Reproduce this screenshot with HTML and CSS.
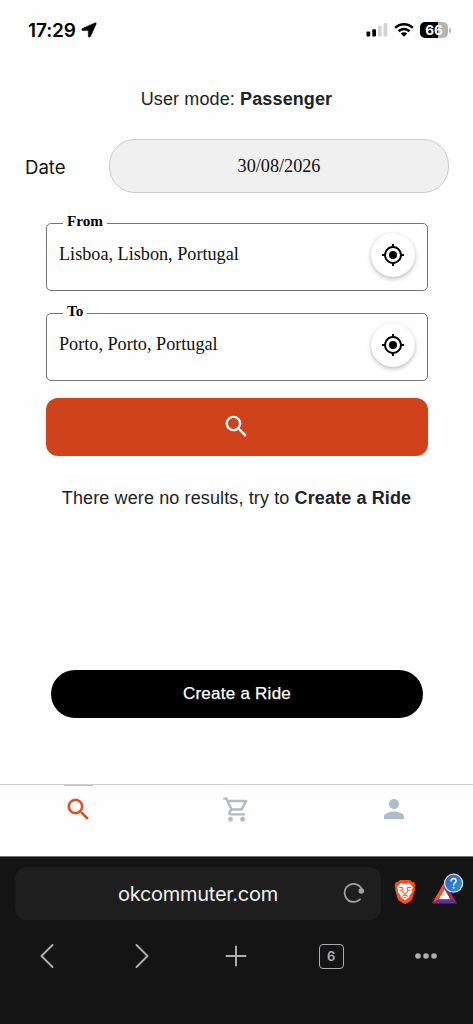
FILE: index.html
```html
<!DOCTYPE html>
<html lang="en">
<head>
<meta charset="utf-8">
<title>okcommuter</title>
<link rel="stylesheet" href="styles.css">
</head>
<body>
<header class="status">
  <div class="status-left">
    <span class="time">17:29</span>
    <svg class="arrow" width="16" height="16" viewBox="0 0 16 16"><path stroke="#000" stroke-width=".5" d="M13.800.9 1.600 6.400c-1.200.6-1 2.200.4 2.200h4.800c.3 0 .5.200.5.500v4.800c0 1.500 1.700 1.700 2.300.4L15.100 2.200c.4-.9-.4-1.700-1.300-1.300Z"/></svg>
  </div>
  <div class="status-right">
    <svg width="22" height="16" viewBox="0 0 22 16"><rect x=".5" y="9.500" width="3.700" height="5" rx="1"/><rect x="6.300" y="7.300" width="3.700" height="7.200" rx="1"/><g fill="#d3d3d3"><rect x="12" y="3.800" width="3.700" height="10.700" rx="1"/><rect x="17.600" y="1" width="3.700" height="13.500" rx="1"/></g></svg>
    <svg width="20" height="16" viewBox="0 0 20 16"><g fill="none" stroke="#000" stroke-width="2.600"><path d="M1.200 5.900C6.200 1 13.800 1 18.800 5.900"/><path d="M4.500 9.200c3.200-3 7.800-3 11 0"/></g><path d="M6.800 11.600c1.900-1.700 4.500-1.700 6.400 0L10 14.800Z"/></svg>
    <div class="battery"><span class="battery-body">66</span><span class="battery-cap"></span></div>
  </div>
</header>

<main class="page">
  <p class="mode">User mode: <b>Passenger</b></p>
  <div class="date-row">
    <label class="date-label">Date</label>
    <div class="date-field">30/08/2026</div>
  </div>
  <form class="search">
    <fieldset class="place">
      <legend class="place-label">From</legend>
      <div class="place-row">
        <span class="place-value">Lisboa, Lisbon, Portugal</span>
        <button class="locate" type="button"><svg width="24" height="24" viewBox="0 0 24 24"><path d="M12 8a4 4 0 1 0 0 8 4 4 0 0 0 0-8zm8.940 3A9 9 0 0 0 13 3.060V1h-2v2.060A9 9 0 0 0 3.060 11H1v2h2.060A9 9 0 0 0 11 20.940V23h2v-2.060A9 9 0 0 0 20.940 13H23v-2h-2.060zM12 19a7 7 0 1 1 0-14 7 7 0 0 1 0 14z"/></svg></button>
      </div>
    </fieldset>
    <fieldset class="place">
      <legend class="place-label">To</legend>
      <div class="place-row">
        <span class="place-value">Porto, Porto, Portugal</span>
        <button class="locate" type="button"><svg width="24" height="24" viewBox="0 0 24 24"><path d="M12 8a4 4 0 1 0 0 8 4 4 0 0 0 0-8zm8.940 3A9 9 0 0 0 13 3.060V1h-2v2.060A9 9 0 0 0 3.060 11H1v2h2.060A9 9 0 0 0 11 20.940V23h2v-2.060A9 9 0 0 0 20.940 13H23v-2h-2.060zM12 19a7 7 0 1 1 0-14 7 7 0 0 1 0 14z"/></svg></button>
      </div>
    </fieldset>
    <button class="submit" type="button"><svg width="29" height="29" viewBox="0 0 24 24"><path fill="#fff" d="M15.500 14h-.79l-.28-.27A6.470 6.470 0 0 0 16 9.500 6.500 6.500 0 1 0 9.500 16c1.610 0 3.090-.59 4.230-1.570l.27.28v.79l5 4.990L20.490 19l-4.990-5zm-6 0C7.010 14 5 11.990 5 9.500S7.010 5 9.500 5 14 7.010 14 9.500 11.990 14 9.500 14z"/></svg></button>
  </form>
  <p class="empty">There were no results, try to <b>Create a Ride</b></p>
  <button class="create" type="button">Create a Ride</button>
</main>

<nav class="tabs">
  <a class="tab tab-active"><svg width="29" height="29" viewBox="0 0 24 24"><path fill="#dc4f24" stroke="#dc4f24" stroke-width=".2" d="M15.500 14h-.79l-.28-.27A6.470 6.470 0 0 0 16 9.500 6.500 6.500 0 1 0 9.500 16c1.610 0 3.090-.59 4.230-1.570l.27.28v.79l5 4.990L20.490 19l-4.990-5zm-6 0C7.010 14 5 11.990 5 9.500S7.010 5 9.500 5 14 7.010 14 9.500 11.990 14 9.500 14z"/></svg></a>
  <a class="tab"><svg width="29" height="29" viewBox="0 0 24 24"><path fill="#aebdc7" d="M15.550 13c.75 0 1.410-.41 1.750-1.030l3.580-6.490A.996.996 0 0 0 20.010 4H5.210l-.94-2H1v2h2l3.600 7.590-1.350 2.440C4.520 15.370 5.480 17 7 17h12v-2H7l1.100-2h7.450zM6.160 6h12.150l-2.760 5H8.530L6.160 6zM7 18c-1.100 0-1.990.9-1.990 2S5.900 22 7 22s2-.9 2-2-.9-2-2-2zm10 0c-1.100 0-1.990.9-1.990 2s.89 2 1.990 2 2-.9 2-2-.9-2-2-2z"/></svg></a>
  <a class="tab"><svg width="30" height="30" viewBox="0 0 24 24"><path fill="#aebdc7" d="M12 12c2.210 0 4-1.790 4-4s-1.790-4-4-4-4 1.790-4 4 1.790 4 4 4zm0 2c-2.670 0-8 1.340-8 4v2h16v-2c0-2.660-5.330-4-8-4z"/></svg></a>
</nav>

<footer class="browser">
  <div class="address-row">
    <div class="address">
      <span class="url">okcommuter.com</span>
      <svg class="reload" width="22" height="22" viewBox="0 0 22 22"><path d="M17 17.300A9 9 0 1 1 19.300 8.600" fill="none" stroke="#a2a2a2" stroke-width="1.700" stroke-linecap="round"/><circle cx="18.300" cy="9" r="2.800" fill="#a2a2a2"/></svg>
    </div>
    <svg class="lion" width="22" height="26" viewBox="0 0 22 26"><defs><linearGradient id="shield"><stop stop-color="#f4511e"/><stop offset="1" stop-color="#fb4a12"/></linearGradient></defs><path fill="url(#shield)" d="M6 1h10l2.200 2.100 1.900-.1 1.400 3.500-.8 2.200.4 1.600-3 10-1.700 2L11 25.300l-5.400-3-1.700-2-3-10 .4-1.600-.8-2.200L1.900 3l1.900.1Z"/><path fill="#fff" d="m6.500 4.300 3 .5 1.500-.3 1.500.3 3-.5 3.500 4-1 2.200.2 2.400-2.500 3-.2 1.800L11 21.500l-4.500-3.800-.2-1.800-2.500-3 .2-2.400-1-2.200Z"/><g fill="none" stroke="#f34e1b" stroke-width="1"><path d="m5 8.200 4 .7-.7 2.700 1 2.500L11 15l1.700-.9 1-2.500-.7-2.700 4-.7M5.500 11.100l2.200.2m8.800-.2-2.200.2M11 15v1.300M7.800 17.400 11 16.100l3.200 1.300M9.500 19.100l1.500-.8 1.500.8"/></g></svg>
    <svg class="bat" width="34" height="34" viewBox="0 0 34 34"><defs><linearGradient id="badge" x2="1" y2="1"><stop stop-color="#3159c9"/><stop offset="1" stop-color="#249dd4"/></linearGradient></defs><path fill="#ff4b26" d="M13.500 10 1 31.500l6.500-4.200 6-10Z"/><path fill="#9c2764" d="m13.500 10 12.500 21.500-6.500-4.200-6-10Z"/><path fill="#62329b" d="M1 31.500h25l-6.500-4.200h-12Z"/><path fill="#fff" d="m13.500 17.300 5.800 10H7.700Z"/><circle cx="22.600" cy="11.200" r="9" fill="url(#badge)" stroke="#dce5f4" stroke-width="1.200"/><path d="M20.100 9c.2-3.500 5.400-3.200 5 .1-.2 1.500-2.500 2-2.500 4" fill="none" stroke="#fff" stroke-width="1.400" stroke-linecap="round"/><circle cx="22.600" cy="15.700" r="1" fill="#fff"/></svg>
  </div>
  <div class="toolbar">
    <span class="tool"><svg width="24" height="28" viewBox="0 0 24 28"><path d="M17.500 3 6.500 14l11 11"/></svg></span>
    <span class="tool"><svg width="24" height="28" viewBox="0 0 24 28"><path d="m6.500 3 11 11-11 11"/></svg></span>
    <span class="tool"><svg width="24" height="24" viewBox="0 0 24 24"><path d="M12 2.500v19M2.500 12h19"/></svg></span>
    <span class="tool"><span class="tab-count">6</span></span>
    <span class="tool"><svg width="24" height="24" viewBox="0 0 24 24"><g fill="#adadad" stroke="none"><circle cx="4" cy="12" r="2.800"/><circle cx="12" cy="12" r="2.800"/><circle cx="20" cy="12" r="2.800"/></g></svg></span>
  </div>
</footer>
</body>
</html>
```
FILE: styles.css
```css
* { box-sizing: border-box; }
body {
  margin: 0;
  width: 473px;
  height: 1024px;
  display: flex;
  flex-direction: column;
  background: #fefefe;
  color: #212225;
  font-family: "Liberation Sans", sans-serif;
  overflow: hidden;
}
svg { display: block; flex: none; }
button { border: 0; padding: 0; font-family: inherit; }

.status {
  height: 60px;
  padding: 0 22px 0 28px;
  display: flex;
  align-items: center;
  justify-content: space-between;
  color: #000;
  font-family: Inter, sans-serif;
}
.status-left { display: flex; align-items: center; gap: 5px; }
.time { font-size: 19px; font-weight: 600; letter-spacing: -0.1px; }
.status-right { display: flex; align-items: center; gap: 6px; }
.battery { display: flex; align-items: center; gap: 1px; }
.battery-body {
  width: 28px;
  height: 16px;
  border-radius: 5px;
  background: linear-gradient(90deg, #000 66%, #b5b5b5 66%);
  color: #fff;
  font-size: 13.5px;
  font-weight: 700;
  line-height: 16px;
  text-align: center;
}
.battery-cap { width: 2px; height: 5px; border-radius: 0 2px 2px 0; background: #b5b5b5; }

.page { height: 724px; flex: none; display: flex; flex-direction: column; }
.mode { margin: 28px 0 0; line-height: 22px; font-size: 18px; text-align: center; letter-spacing: 0.12px; }
.date-row { display: flex; align-items: center; margin: 29px 24px 0 25px; }
.date-label { width: 84px; padding-top: 1px; color: #111; font: 18.6px/24px Inter, sans-serif; }
.date-field {
  flex: 1;
  height: 54px;
  border: 1px solid #cbcbcb;
  border-radius: 26px;
  background: #f0f0f0;
  color: #111;
  font: 18.2px/52px "Liberation Serif", serif;
  text-align: center;
}
.search { display: flex; flex-direction: column; margin: 20px 45px 0 46px; gap: 12px; }
.place {
  height: 78px;
  min-width: 0;
  margin: 0;
  padding: 0 12px;
  border: 1px solid #757575;
  border-radius: 5px;
  color: #111;
  font: 18.2px/24px "Liberation Serif", serif;
}
.place-label { margin-left: 4px; padding: 0 4px 4px; color: #000; font-size: 15.2px; font-weight: 700; line-height: 16px; }
.place-row { display: flex; justify-content: space-between; align-items: center; height: 43px; }
.place-value { padding-bottom: 2px; }
.locate {
  width: 44px;
  height: 44px;
  border-radius: 50%;
  background: #fff;
  color: #000;
  display: grid;
  place-items: center;
  box-shadow: 0 2px 4px rgba(0, 0, 0, 0.24), 0 0 3px rgba(0, 0, 0, 0.06);
}
.submit {
  height: 58px;
  margin-top: 5px;
  padding: 0 2px 2px 0;
  border-radius: 12px;
  background: #cf421b;
  display: grid;
  place-items: center;
}
.empty { margin: 31px 0 0; line-height: 22px; font-size: 18px; text-align: center; letter-spacing: 0.12px; }
.create {
  height: 48px;
  margin: auto 50px 66px 51px;
  border-radius: 24px;
  background: #000;
  color: #fff;
  font-size: 17px;
  letter-spacing: 0.25px;
  -webkit-text-stroke: 0.25px #fff;
}

.tabs {
  height: 72px;
  flex: none;
  display: grid;
  grid-template-columns: repeat(3, 1fr);
  border-top: 1px solid #d8cccc;
}
.tab { display: flex; justify-content: center; padding-top: 10px; }
.tab:last-child { padding-top: 9px; }
.tab-active {
  background: linear-gradient(#cfb8b8, #cfb8b8) center top / 29px 1px no-repeat;
}

.browser { height: 168px; flex: none; border-top: 1px solid #777; background: #141414; }
.address-row { display: flex; align-items: center; padding: 10px 0 0 15px; }
.address {
  width: 366px;
  flex: none;
  height: 53px;
  padding: 0 16px 0 103px;
  border-radius: 12px;
  background: #1e1e1e;
  display: flex;
  align-items: center;
  justify-content: space-between;
}
.url { color: #f2f2f2; font: 20px/24px Inter, sans-serif; letter-spacing: -0.28px; }
.reload { margin-bottom: 2px; }
.lion { margin: 0 0 3px 13px; }
.bat { margin: -10px 0 0 15px; }
.toolbar { display: grid; grid-template-columns: repeat(5, 94.6px); height: 72px; }
.tool { display: grid; place-items: center; }
.tool svg { fill: none; stroke: #adadad; stroke-width: 2; stroke-linecap: round; stroke-linejoin: round; }
.tab-count {
  width: 25px;
  height: 25px;
  border: 1.5px solid #adadad;
  border-radius: 4px;
  color: #adadad;
  font: 600 13px/22px Inter, sans-serif;
  text-align: center;
}
```
